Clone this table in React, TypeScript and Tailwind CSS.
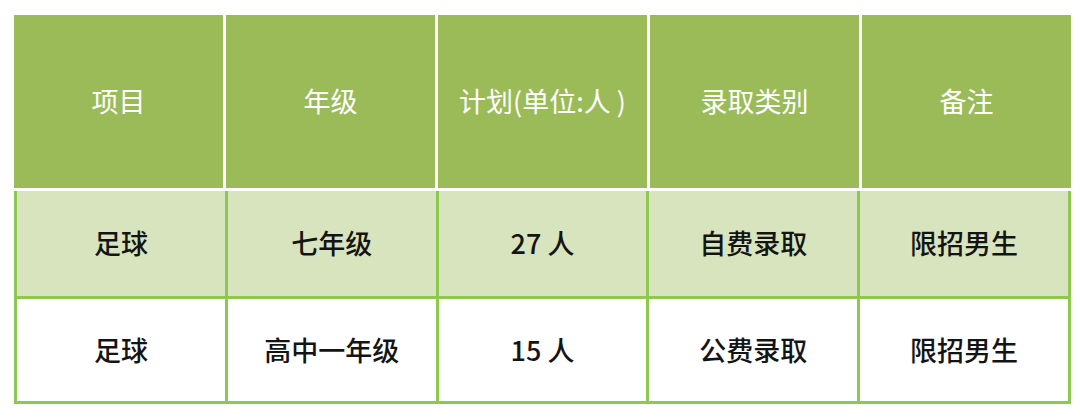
const HEAD = ["项目", "年级", "计划(单位:人 )", "录取类别", "备注"];

const ROWS = [
  { bg: "bg-[#d7e4bd]", h: "h-[105px]", cells: ["足球", "七年级", "27 人", "自费录取", "限招男生"] },
  { bg: "bg-white", h: "h-[102px]", cells: ["足球", "高中一年级", "15 人", "公费录取", "限招男生"] },
];

export default function App() {
  return (
    <div
      className="w-[1080px] h-[418px] bg-white pl-[14px] pt-[15px]"
      style={{ fontFamily: '"Noto Sans CJK SC", "Noto Sans", sans-serif' }}
    >
      <div className="w-[1057px]">
        {/* header */}
        <div className="grid grid-cols-5 gap-x-[3px] bg-white">
          {HEAD.map((h) => (
            <div
              key={h}
              className="h-[173px] bg-[#9bbb59] flex items-center justify-center text-white text-[27px]"
            >
              {h}
            </div>
          ))}
        </div>

        {/* body */}
        <div className="mt-[3px] bg-[#8dc852] px-[3px] pb-[3px] flex flex-col gap-[3px]">
          {ROWS.map((row, i) => (
            <div key={i} className="grid grid-cols-5 gap-x-[3px]">
              {row.cells.map((c, j) => (
                <div
                  key={j}
                  className={`${row.bg} ${row.h} flex items-center justify-center text-[27px] font-medium text-[#141414]`}
                >
                  {c}
                </div>
              ))}
            </div>
          ))}
        </div>
      </div>
    </div>
  );
}
